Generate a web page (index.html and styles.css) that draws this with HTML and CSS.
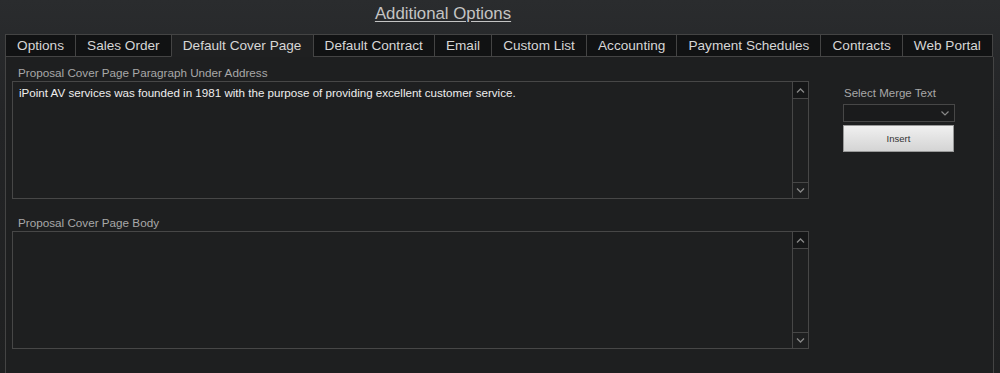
FILE: index.html
```html
<!DOCTYPE html>
<html lang="en">
<head>
  <meta charset="UTF-8">
  <title>Additional Options</title>
  <link rel="stylesheet" href="styles.css">
</head>
<body>
  <div class="header">
    <a class="title">Additional Options</a>
  </div>

  <div class="tabs">
    <div class="tab">Options</div>
    <div class="tab">Sales Order</div>
    <div class="tab active">Default Cover Page</div>
    <div class="tab">Default Contract</div>
    <div class="tab">Email</div>
    <div class="tab">Custom List</div>
    <div class="tab">Accounting</div>
    <div class="tab">Payment Schedules</div>
    <div class="tab">Contracts</div>
    <div class="tab">Web Portal</div>
  </div>

  <div class="panel">
    <div class="fields">
      <div class="field">
        <label>Proposal Cover Page Paragraph Under Address</label>
        <div class="textbox">
          <div class="text">iPoint AV services was founded in 1981 with the purpose of providing excellent customer service.</div>
          <div class="scroll">
            <div class="arrow up"><svg width="9" height="5" viewBox="0 0 9 5"><path d="M1 4.5 L4.5 1 L8 4.5" fill="none" stroke="#888" stroke-width="1.3"/></svg></div>
            <div class="track"></div>
            <div class="arrow down"><svg width="9" height="5" viewBox="0 0 9 5"><path d="M1 0.5 L4.5 4 L8 0.5" fill="none" stroke="#888" stroke-width="1.3"/></svg></div>
          </div>
        </div>
      </div>

      <div class="field">
        <label>Proposal Cover Page Body</label>
        <div class="textbox">
          <div class="text"></div>
          <div class="scroll">
            <div class="arrow up"><svg width="9" height="5" viewBox="0 0 9 5"><path d="M1 4.5 L4.5 1 L8 4.5" fill="none" stroke="#888" stroke-width="1.3"/></svg></div>
            <div class="track"></div>
            <div class="arrow down"><svg width="9" height="5" viewBox="0 0 9 5"><path d="M1 0.5 L4.5 4 L8 0.5" fill="none" stroke="#888" stroke-width="1.3"/></svg></div>
          </div>
        </div>
      </div>
    </div>

    <div class="merge">
      <div class="merge-label">Select Merge Text</div>
      <div class="select">
        <svg width="8" height="5" viewBox="0 0 8 5"><path d="M0.5 0.5 L4 4 L7.5 0.5" fill="none" stroke="#888" stroke-width="1.2"/></svg>
      </div>
      <button class="insert">Insert</button>
    </div>
  </div>
</body>
</html>
```

FILE: styles.css
```css
body {
  margin: 0;
  height: 373px;
  overflow: hidden;
  font-family: "Liberation Sans", Arial, sans-serif;
  background: linear-gradient(to bottom, #2a2c2e 0px, #232426 120px, #1f2021 373px);
  color: #ddd;
}
.header {
  height: 34px;
  padding-right: 114px;
  text-align: center;
}
.title {
  display: inline-block;
  margin-top: 4px;
  font-size: 16.8px;
  line-height: 20px;
  color: #c4c4c4;
  text-decoration: underline;
  text-underline-offset: 2px;
}
.tabs {
  display: flex;
  margin-left: 5px;
  width: 988px;
}
.tab {
  height: 21px;
  line-height: 22px;
  padding: 0 9px;
  font-size: 13.6px;
  color: #d6d6d6;
  background-color: #111213;
  border-top: 1px solid #444;
  border-left: 1px solid #444;
  border-bottom: 1px solid #444;
  white-space: nowrap;
  flex: 1 1 auto;
  text-align: center;
}
.tab:last-child {
  border-right: 1px solid #444;
}
.tab.active {
  background-color: #1f2021;
  border-bottom-color: #1f2021;
}
.panel {
  display: flex;
  margin-left: 5px;
  width: 987px;
  height: 330px;
  border-left: 1px solid #444;
  border-right: 1px solid #444;
  background-color: #1e1f20;
}
.fields {
  display: flex;
  flex-direction: column;
  gap: 17px;
  padding: 9px 0 0 6px;
  width: 797px;
}
.field label {
  display: block;
  font-size: 11.7px;
  line-height: 14px;
  color: #a8a8a8;
  padding-left: 6px;
  margin-bottom: 1px;
}
.textbox {
  display: flex;
  height: 116px;
  border: 1px solid #474747;
  background-color: #1e1f20;
}
.text {
  flex: 1;
  padding: 4px 6px;
  font-size: 11.6px;
  line-height: 14px;
  color: #eee;
}
.scroll {
  display: flex;
  flex-direction: column;
  width: 15px;
  border-left: 1px solid #474747;
}
.arrow {
  height: 16px;
  display: flex;
  align-items: center;
  justify-content: center;
  background-color: #151617;
}
.arrow.up {
  border-bottom: 1px solid #474747;
}
.arrow.down {
  height: 15px;
  border-top: 1px solid #474747;
  background-color: #1e1f20;
}
.track {
  flex: 1;
}
.merge {
  padding: 31px 0 0 34px;
  width: 112px;
}
.merge-label {
  font-size: 11.5px;
  line-height: 14px;
  color: #a8a8a8;
  padding-left: 1px;
  margin-top: -2px;
  margin-bottom: 4px;
}
.select {
  height: 16px;
  border: 1px solid #474747;
  background-color: #1a1b1c;
  display: flex;
  align-items: center;
  justify-content: flex-end;
  padding-right: 5px;
}
.insert {
  display: block;
  margin-top: 3px;
  width: 111px;
  height: 27px;
  border: 1px solid #999;
  background: linear-gradient(to bottom, #f0f0f0, #d4d4d4);
  font-family: "Liberation Sans", Arial, sans-serif;
  font-size: 9.5px;
  color: #333;
  padding: 0;
}
```
